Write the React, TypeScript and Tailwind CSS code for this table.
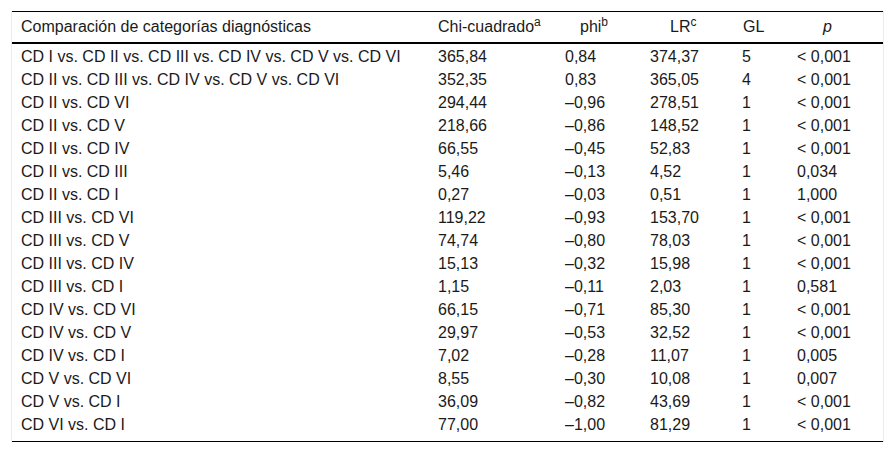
const rows: [string, string, string, string, string, string][] = [
  ['CD I vs. CD II vs. CD III vs. CD IV vs. CD V vs. CD VI', '365,84', '0,84', '374,37', '5', '< 0,001'],
  ['CD II vs. CD III vs. CD IV vs. CD V vs. CD VI', '352,35', '0,83', '365,05', '4', '< 0,001'],
  ['CD II vs. CD VI', '294,44', '–0,96', '278,51', '1', '< 0,001'],
  ['CD II vs. CD V', '218,66', '–0,86', '148,52', '1', '< 0,001'],
  ['CD II vs. CD IV', '66,55', '–0,45', '52,83', '1', '< 0,001'],
  ['CD II vs. CD III', '5,46', '–0,13', '4,52', '1', '0,034'],
  ['CD II vs. CD I', '0,27', '–0,03', '0,51', '1', '1,000'],
  ['CD III vs. CD VI', '119,22', '–0,93', '153,70', '1', '< 0,001'],
  ['CD III vs. CD V', '74,74', '–0,80', '78,03', '1', '< 0,001'],
  ['CD III vs. CD IV', '15,13', '–0,32', '15,98', '1', '< 0,001'],
  ['CD III vs. CD I', '1,15', '–0,11', '2,03', '1', '0,581'],
  ['CD IV vs. CD VI', '66,15', '–0,71', '85,30', '1', '< 0,001'],
  ['CD IV vs. CD V', '29,97', '–0,53', '32,52', '1', '< 0,001'],
  ['CD IV vs. CD I', '7,02', '–0,28', '11,07', '1', '0,005'],
  ['CD V vs. CD VI', '8,55', '–0,30', '10,08', '1', '0,007'],
  ['CD V vs. CD I', '36,09', '–0,82', '43,69', '1', '< 0,001'],
  ['CD VI vs. CD I', '77,00', '–1,00', '81,29', '1', '< 0,001'],
];

const grid = 'grid grid-cols-[416px_127px_85px_92px_55px_1fr]';

export default function App() {
  return (
    <div className="min-h-[453px] bg-white px-[11px] pt-[11px] font-['Liberation_Sans',Arial,sans-serif] text-[16px] text-[#1a1a1a]">
      <div className="w-[873px] border-x border-[#ececec]">
        <div className={`${grid} h-[31px] items-center border-t border-black`}>
          <div className="pl-[9px]">Comparación de categorías diagnósticas</div>
          <div className="pl-[10px]">
            Chi-cuadrado<sup className="text-[12px]">a</sup>
          </div>
          <div className="pl-[25px]">
            phi<sup className="text-[12px]">b</sup>
          </div>
          <div className="pl-[30px]">
            LR<sup className="text-[12px]">c</sup>
          </div>
          <div className="pl-[11px]">GL</div>
          <div className="pl-[36px] italic">p</div>
        </div>
        <div className="h-[2px] bg-black" />
        <div className="border-b border-black pt-[1px] pb-[5px]">
          {rows.map((r) => (
            <div key={r[0]} className={`${grid} h-[23px] items-center`}>
              <div className="pl-[9px]">{r[0]}</div>
              <div className="pl-[10px]">{r[1]}</div>
              <div className="pl-[10px]">{r[2]}</div>
              <div className="pl-[10px]">{r[3]}</div>
              <div className="pl-[10px]">{r[4]}</div>
              <div className="pl-[10px]">{r[5]}</div>
            </div>
          ))}
        </div>
      </div>
    </div>
  );
}
